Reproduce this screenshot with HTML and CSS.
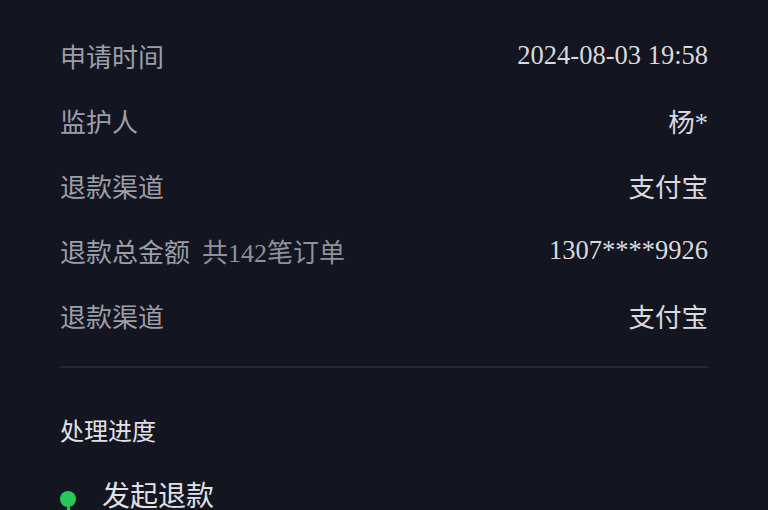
FILE: index.html
```html
<!DOCTYPE html>
<html lang="zh-CN">
<head>
<meta charset="utf-8">
<link rel="stylesheet" href="styles.css">
</head>
<body>
<div class="page">
  <div class="rows">
    <div class="row"><span class="label">申请时间</span><span class="value">2024-08-03 19:58</span></div>
    <div class="row"><span class="label">监护人</span><span class="value">杨*</span></div>
    <div class="row"><span class="label">退款渠道</span><span class="value">支付宝</span></div>
    <div class="row"><span class="label">退款总金额<span class="sub">共142笔订单</span></span><span class="value">1307****9926</span></div>
    <div class="row"><span class="label">退款渠道</span><span class="value">支付宝</span></div>
  </div>
  <div class="divider"></div>
  <div class="section-title">处理进度</div>
  <div class="steps">
    <div class="step">
      <div class="marker"><span class="dot"></span><span class="line"></span></div>
      <div class="step-text">发起退款</div>
    </div>
  </div>
</div>
</body>
</html>
```
FILE: styles.css
```css
html, body {
  margin: 0;
  padding: 0;
  background: #131520;
  height: 100%;
  overflow: hidden;
}
body {
  font-family: "Liberation Serif", "Noto Sans CJK SC", serif;
}
.page {
  padding: 23px 60px 0 60px;
}
.rows {
  display: flex;
  flex-direction: column;
}
.row {
  height: 65px;
  display: flex;
  align-items: center;
  justify-content: space-between;
  font-size: 26px;
}
.label {
  color: #9c9ea8;
}
.sub {
  margin-left: 12px;
  color: #8f919b;
}
.value {
  color: #d9dadf;
  font-size: 26.5px;
}
.divider {
  margin-top: 18px;
  height: 2px;
  background: #262835;
}
.section-title {
  margin-top: 44px;
  font-size: 24px;
  line-height: 40px;
  color: #e2e3e7;
}
.steps {
  margin-top: 37px;
}
.step {
  display: flex;
  align-items: flex-start;
}
.marker {
  width: 16px;
  display: flex;
  flex-direction: column;
  align-items: center;
  padding-top: 2px;
}
.dot {
  width: 16px;
  height: 16px;
  border-radius: 50%;
  background: #27c95a;
}
.line {
  width: 3px;
  height: 40px;
  background: #27c95a;
}
.step-text {
  margin-left: 26px;
  font-size: 28px;
  line-height: 40px;
  margin-top: -12px;
  color: #e0e1e5;
}
```
